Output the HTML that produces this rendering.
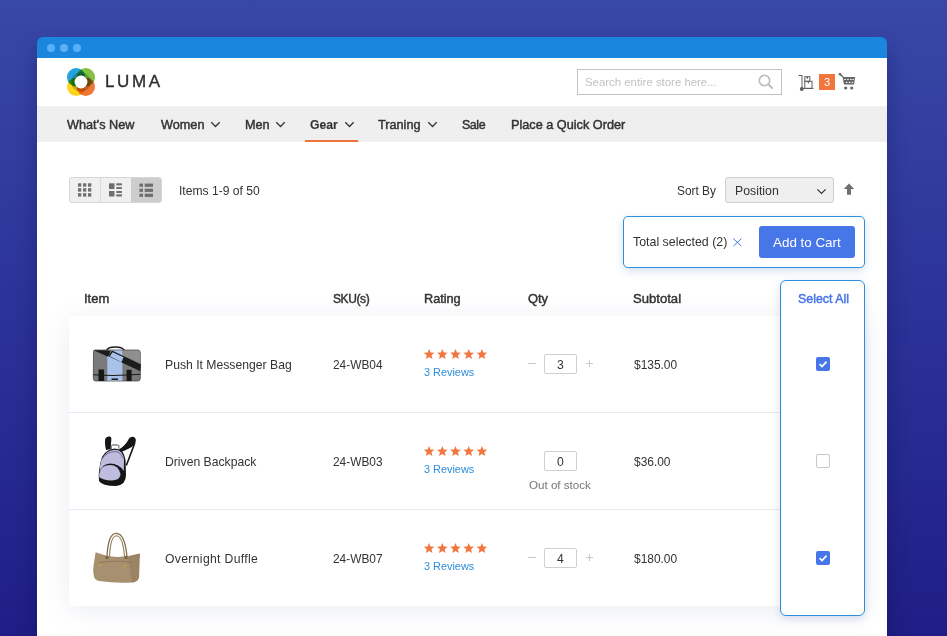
<!DOCTYPE html>
<html><head><meta charset="utf-8">
<style>
*{box-sizing:border-box;margin:0;padding:0}
html,body{width:947px;height:636px;overflow:hidden}
body{background:linear-gradient(180deg,#3848a6 0%,#2b3298 50%,#1f1e86 100%);font-family:"Liberation Sans",sans-serif;color:#333;position:relative}
.a{position:absolute;white-space:nowrap;line-height:1}
.win{position:absolute;left:37px;top:50px;width:850px;height:620px;background:#fff;border-radius:0;box-shadow:0 0 20px rgba(10,10,60,.3)}
.bar{position:absolute;left:37px;top:37px;width:850px;height:21px;background:#1a86dd;border-radius:6px 6px 0 0}
.dot{position:absolute;top:44px;width:8px;height:8px;border-radius:50%;background:#5ab0fb}
.nav{position:absolute;left:37px;top:106px;width:850px;height:36px;background:#efefef}
.nv{font-size:12.7px;font-weight:normal;color:#333;-webkit-text-stroke:0.45px #333}
.th{font-size:12.7px;font-weight:normal;color:#333;-webkit-text-stroke:0.45px #333}
.td{font-size:12.2px;color:#333}
.rv{font-size:10.9px;color:#2d8ddb}
svg{position:absolute;overflow:visible}
</style></head><body>
<div class="win"></div>
<div class="bar"></div>
<div class="dot" style="left:47px"></div>
<div class="dot" style="left:60px"></div>
<div class="dot" style="left:73px"></div>

<!-- logo -->
<svg style="left:67px;top:68px" width="28" height="28" viewBox="0 0 28 28">
  <g style="isolation:isolate">
  <circle cx="9.2" cy="9.2" r="9.2" fill="#26a3dd" style="mix-blend-mode:multiply"/>
  <circle cx="18.8" cy="9.2" r="9.2" fill="#83c341" style="mix-blend-mode:multiply"/>
  <circle cx="9.2" cy="18.8" r="9.2" fill="#fdd51a" style="mix-blend-mode:multiply"/>
  <circle cx="18.8" cy="18.8" r="9.2" fill="#f07636" style="mix-blend-mode:multiply"/>
  </g>
  <circle cx="14" cy="14" r="8" fill="none" stroke="rgba(0,0,0,.2)" stroke-width="3.6"/>
  <circle cx="14" cy="14" r="6.4" fill="#fff"/>
</svg>
<div class="a" style="left:105px;top:73px;font-size:17px;letter-spacing:2.6px;color:#2e2e2e;-webkit-text-stroke:0.35px #2e2e2e">LUMA</div>

<!-- search -->
<div class="a" style="left:577px;top:69px;width:205px;height:26px;border:1px solid #c2c2c2"></div>
<div class="a" style="left:585px;top:77px;font-size:11.4px;color:#c2c2c2">Search entire store here...</div>
<svg style="left:758px;top:74px" width="16" height="16" viewBox="0 0 16 16">
  <circle cx="6.5" cy="6.5" r="5.2" fill="none" stroke="#bcbcbc" stroke-width="1.6"/>
  <line x1="10.3" y1="10.3" x2="14.6" y2="14.6" stroke="#bcbcbc" stroke-width="2"/>
</svg>

<!-- nav -->
<div class="nav"></div>
<div class="a nv" style="left:67px;top:119px">What’s New</div>
<div class="a nv" style="left:161px;top:119px">Women</div>
<div class="a nv" style="left:245px;top:119px">Men</div>
<div class="a nv" style="left:310px;top:119px;font-size:12.2px;font-weight:bold;-webkit-text-stroke:0.1px #333">Gear</div>
<div class="a nv" style="left:378px;top:119px">Traning</div>
<div class="a nv" style="left:462px;top:119px;font-size:12.4px;letter-spacing:-0.4px">Sale</div>
<div class="a nv" style="left:511px;top:119px">Place a Quick Order</div>
<div class="a" style="left:305px;top:140px;width:53px;height:2px;background:#f0743a"></div>
<svg style="left:211px;top:122px" width="9" height="5" viewBox="0 0 9 5"><polyline points="0.3,0.3 4.5,4.5 8.7,0.3" fill="none" stroke="#333" stroke-width="1.3"/></svg>
<svg style="left:276px;top:122px" width="9" height="5" viewBox="0 0 9 5"><polyline points="0.3,0.3 4.5,4.5 8.7,0.3" fill="none" stroke="#333" stroke-width="1.3"/></svg>
<svg style="left:345px;top:122px" width="9" height="5" viewBox="0 0 9 5"><polyline points="0.3,0.3 4.5,4.5 8.7,0.3" fill="none" stroke="#333" stroke-width="1.3"/></svg>
<svg style="left:428px;top:122px" width="9" height="5" viewBox="0 0 9 5"><polyline points="0.3,0.3 4.5,4.5 8.7,0.3" fill="none" stroke="#333" stroke-width="1.3"/></svg>

<!-- header icons -->
<svg style="left:797px;top:73px" width="18" height="18" viewBox="0 0 18 18">
  <g fill="none" stroke="#5e5e5e" stroke-width="1">
    <path d="M1.5 2.5 H5 V15.5"/>
    <path d="M5 15.4 H16.6"/>
    <rect x="7.8" y="3.7" width="5" height="4.6"/>
    <rect x="7.8" y="8.3" width="7.2" height="7.1"/>
  </g>
  <rect x="9.6" y="3.7" width="1.4" height="2" fill="#5e5e5e"/>
  <rect x="10.7" y="8.3" width="1.4" height="2" fill="#5e5e5e"/>
  <circle cx="4.8" cy="16" r="2" fill="#5e5e5e"/>
</svg>
<div class="a" style="left:819px;top:74px;width:16px;height:16px;background:#f1763b"></div>
<div class="a" style="left:819px;top:77px;width:16px;text-align:center;font-size:11px;color:#fff">3</div>
<svg style="left:838px;top:72px" width="19" height="19" viewBox="0 0 19 19">
  <path d="M2 2.2 L5 5.1" stroke="#666" stroke-width="1.4" fill="none"/>
  <circle cx="2" cy="2.2" r="1.3" fill="#666"/>
  <path d="M4.6 5 H17.2 L16 12.6 H6 Z" fill="#666"/>
  <g fill="#fff">
    <rect x="6.3" y="6.9" width="1.5" height="1.1"/><rect x="9.2" y="6.9" width="1.5" height="1.1"/><rect x="12.1" y="6.9" width="1.5" height="1.1"/><rect x="14.6" y="6.9" width="1.3" height="1.1"/>
    <rect x="7.9" y="9.9" width="1.5" height="1.1"/><rect x="10.8" y="9.9" width="1.5" height="1.1"/><rect x="13.6" y="9.9" width="1.5" height="1.1"/>
  </g>
  <circle cx="7.7" cy="16" r="1.6" fill="#666"/>
  <circle cx="13.7" cy="16" r="1.6" fill="#666"/>
</svg>

<!-- toolbar -->
<div class="a" style="left:69px;top:177px;width:93px;height:26px;border:1px solid #d6d6d6;border-radius:3px;background:#f0f0f0;overflow:hidden">
  <div class="a" style="left:30px;top:0;width:1px;height:24px;background:#dcdcdc"></div>
  <div class="a" style="left:61px;top:0;width:31px;height:24px;background:#cdcdcd"></div>
</div>
<svg style="left:78px;top:183px" width="14" height="14" viewBox="0 0 14 14" fill="#6f6f6f">
  <rect x="0" y="0.3" width="3.3" height="3.4"/><rect x="5" y="0.3" width="3.3" height="3.4"/><rect x="10" y="0.3" width="3.3" height="3.4"/>
  <rect x="0" y="5.2" width="3.3" height="3.4"/><rect x="5" y="5.2" width="3.3" height="3.4"/><rect x="10" y="5.2" width="3.3" height="3.4"/>
  <rect x="0" y="10.2" width="3.3" height="3.4"/><rect x="5" y="10.2" width="3.3" height="3.4"/><rect x="10" y="10.2" width="3.3" height="3.4"/>
</svg>
<svg style="left:109px;top:183px" width="14" height="14" viewBox="0 0 14 14" fill="#6f6f6f">
  <rect x="0" y="0.3" width="5.5" height="5.7"/><rect x="0" y="8" width="5.5" height="5.5"/>
  <rect x="7.3" y="0.3" width="5.6" height="2.1"/><rect x="7.3" y="4.1" width="5.6" height="1.9"/>
  <rect x="7.3" y="8" width="5.6" height="2"/><rect x="7.3" y="11.3" width="5.6" height="2.2"/>
</svg>
<svg style="left:139px;top:183px" width="15" height="14" viewBox="0 0 15 14" fill="#6f6f6f">
  <rect x="0.4" y="0.6" width="3.6" height="3.2"/><rect x="5.7" y="0.6" width="8.3" height="3.2"/>
  <rect x="0.4" y="5.7" width="3.6" height="3.2"/><rect x="5.7" y="5.7" width="8.3" height="3.2"/>
  <rect x="0.4" y="10.7" width="3.6" height="3.2"/><rect x="5.7" y="10.7" width="8.3" height="3.2"/>
</svg>
<div class="a td" style="left:179px;top:185px;font-size:12.1px">Items 1-9 of 50</div>

<div class="a td" style="left:677px;top:186px;font-size:11.9px">Sort By</div>
<div class="a" style="left:725px;top:177px;width:109px;height:26px;border:1px solid #cfcfcf;border-radius:3px;background:#efefef"></div>
<div class="a td" style="left:735px;top:185px;font-size:12.3px">Position</div>
<svg style="left:817px;top:189px" width="9" height="5" viewBox="0 0 9 5"><polyline points="0.4,0.4 4.5,4.4 8.6,0.4" fill="none" stroke="#333" stroke-width="1.2"/></svg>
<svg style="left:843px;top:183px" width="12" height="12" viewBox="0 0 12 12"><path d="M6 0.4 L11.2 6 H8 V11.8 H4 V6 H0.8 Z" fill="#707070"/></svg>

<!-- selected box -->
<div class="a" style="left:623px;top:216px;width:242px;height:52px;border:1.5px solid #2b8fe0;border-radius:5px;background:#fff;box-shadow:0 3px 8px rgba(40,80,160,.18)"></div>
<div class="a td" style="left:633px;top:236px;font-size:12.4px">Total selected (2)</div>
<svg style="left:733px;top:238px" width="9" height="9" viewBox="0 0 9 9"><path d="M0.3 0.6 L8.4 8.1 M8.4 0.6 L0.3 8.1" stroke="#4776e9" stroke-width="1"/></svg>
<div class="a" style="left:759px;top:226px;width:96px;height:32px;background:#4776e9;border-radius:3px"></div>
<div class="a" style="left:773px;top:236px;font-size:13.4px;color:#fff">Add to Cart</div>

<!-- table card -->
<div class="a" style="left:69px;top:316px;width:796px;height:290px;background:#fff;border-radius:3px;box-shadow:0 4px 28px rgba(60,80,150,.10)"></div>
<div class="a" style="left:69px;top:412px;width:712px;height:1px;background:#e7ebf4"></div>
<div class="a" style="left:69px;top:509px;width:712px;height:1px;background:#e7ebf4"></div>

<div class="a th" style="left:84px;top:292px;font-size:13px">Item</div>
<div class="a th" style="left:333px;top:293px;font-size:12px;letter-spacing:-0.4px">SKU(s)</div>
<div class="a th" style="left:424px;top:293px;font-size:12.7px">Rating</div>
<div class="a th" style="left:528px;top:293px;font-size:12.9px">Qty</div>
<div class="a th" style="left:633px;top:292px;font-size:13.1px">Subtotal</div>

<!-- select column -->
<div class="a" style="left:780px;top:280px;width:85px;height:336px;border:1.5px solid #2b8fe0;border-radius:6px;background:#fff;box-shadow:0 3px 8px rgba(40,80,160,.18)"></div>
<div class="a th" style="left:798px;top:293px;font-size:12.4px;color:#4776e9;-webkit-text-stroke:0.45px #4776e9">Select All</div>


<!-- product images -->
<svg style="left:88px;top:340px" width="58" height="48" viewBox="0 0 58 48">
  <path d="M18.5 10.8 Q19.5 7 27.3 7 Q35 7 36.5 10.8" fill="none" stroke="#1e1e1e" stroke-width="1.6"/>
  <path d="M5.5 11.5 Q5.3 10 7 10 H50 Q52.3 10.2 52.3 12.5 V38.5 Q52.3 41 49.5 41 H8 Q5.3 41 5.3 38.5 Z" fill="#7a7a7a" stroke="#3a3a3a" stroke-width="0.7"/>
  <path d="M34.6 10.4 H50 Q52 10.4 52 12.5 V23 L34.6 15.5 Z" fill="#8f8f8f"/>
  <rect x="19.3" y="10.4" width="15.1" height="30.3" fill="#a8c2ea"/>
  <path d="M5.6 10.2 L23 10.6 L20 16.8 Z" fill="#1c1c1c"/>
  <path d="M24 10.6 L53 24.5 L52.3 31.2 L20 16 Z" fill="#1c1c1c"/>
  <path d="M24.6 12.2 L35.5 17.3 L33.5 22.2 L21.8 16.2 Z" fill="#a8c2ea"/>
  <path d="M5.3 34.8 Q28 36.3 52.3 34.3" fill="none" stroke="#1a1a1a" stroke-width="1.1"/>
  <rect x="10.5" y="29.5" width="5.6" height="11.5" fill="#161616"/>
  <rect x="38.6" y="29.8" width="5" height="11.2" fill="#161616"/>
  <rect x="23.5" y="38.4" width="6.5" height="1.6" fill="#222"/>
</svg>
<svg style="left:88px;top:430px" width="58" height="60" viewBox="0 0 58 60">
  <path d="M18 20 Q16.2 12 17.5 8.3 Q19 6 22 6.6 Q24 7.5 23.3 10 Q22.3 14 23.8 19 Z" fill="#151515"/>
  <path d="M31 19.5 Q38 15 41 8.5 Q43 6 46 7 Q48.5 8.5 47.6 12 Q46 16 41 18.5 Q36 21 33 22 Z" fill="#151515"/>
  <path d="M46.8 13 L38.3 35.5" fill="none" stroke="#151515" stroke-width="1.6"/>
  <path d="M23.3 19.5 V15.5 Q27 14 30.8 15.5 V19.5" fill="none" stroke="#8a8a8a" stroke-width="1.3"/>
  <path d="M14 27 Q18 19 27 18.5 Q36 19 37.5 30 L38 45 Q38 55 28 56 Q14 56 11 51 Q9.8 40 14 27 Z" fill="#151515"/>
  <path d="M13.5 30 Q18 19.8 27 19.8 Q35.3 20.3 36 30 L35.8 41 Q31 33.5 22 33.5 Q14 34 11.6 42.5 Q11.7 35 13.5 30 Z" fill="#bdbbde"/>
  <path d="M11.2 44 Q13 35 22 35 Q30.5 35 32.5 44 Q32.5 49.5 26 50.3 Q16 51 11.2 47 Z" fill="#bfbddf"/>
  <path d="M14.5 28 Q19 22 27 21.5 Q33 22 34.5 28" fill="none" stroke="#3c3a50" stroke-width="0.6"/>
</svg>
<svg style="left:88px;top:526px" width="58" height="62" viewBox="0 0 58 62">
  <path d="M19 31 Q20 7 28.3 7.3 Q37 7.5 39 31" fill="none" stroke="#7f6a4a" stroke-width="1.3"/>
  <path d="M21.5 31 Q22.5 10 28.3 9.8 Q35 10 36.5 31" fill="none" stroke="#8f7a58" stroke-width="1.1"/>
  <path d="M7.6 26.3 Q18 30.5 29.2 31 Q41 30.8 51.8 27.6 Q52.5 29 51.3 32 L51 51 Q50 56 44 56.5 Q28 57.5 11 55 Q6.5 54 5.8 50 Q4.5 44 5.8 38 Z" fill="#a69070"/>
  <path d="M40 31 L51.8 27.6 L51 51 Q50 56 44 56.5 Z" fill="#9a8463"/>
  <path d="M10 37 Q28 33.5 44 36.5" fill="none" stroke="#8a7455" stroke-width="0.8"/>
  <rect x="17.5" y="30" width="3" height="3" fill="#7a6546"/>
  <rect x="36.5" y="30" width="3" height="3" fill="#7a6546"/>
  <rect x="11.5" y="37.5" width="1.5" height="2.2" fill="#c9a93a"/>
  <rect x="36" y="38.5" width="1.5" height="2.2" fill="#c9a93a"/>
</svg>

<!-- rows -->
<div class="a td" style="left:165px;top:359px">Push It Messenger Bag</div>
<div class="a td" style="left:333px;top:360px;font-size:11.9px">24-WB04</div>
<svg style="left:424px;top:349px" width="64" height="11" viewBox="0 0 64 11" fill="#f0773f"><polygon transform="translate(0.0,0)" points="5.10,-0.10 6.57,3.48 10.43,3.77 7.48,6.27 8.39,10.03 5.10,8.00 1.81,10.03 2.72,6.27 -0.23,3.77 3.63,3.48"/><polygon transform="translate(13.2,0)" points="5.10,-0.10 6.57,3.48 10.43,3.77 7.48,6.27 8.39,10.03 5.10,8.00 1.81,10.03 2.72,6.27 -0.23,3.77 3.63,3.48"/><polygon transform="translate(26.4,0)" points="5.10,-0.10 6.57,3.48 10.43,3.77 7.48,6.27 8.39,10.03 5.10,8.00 1.81,10.03 2.72,6.27 -0.23,3.77 3.63,3.48"/><polygon transform="translate(39.6,0)" points="5.10,-0.10 6.57,3.48 10.43,3.77 7.48,6.27 8.39,10.03 5.10,8.00 1.81,10.03 2.72,6.27 -0.23,3.77 3.63,3.48"/><polygon transform="translate(52.8,0)" points="5.10,-0.10 6.57,3.48 10.43,3.77 7.48,6.27 8.39,10.03 5.10,8.00 1.81,10.03 2.72,6.27 -0.23,3.77 3.63,3.48"/></svg>
<div class="a rv" style="left:424px;top:367px">3 Reviews</div>
<div class="a" style="left:544px;top:354px;width:33px;height:20px;border:1px solid #cfcfcf;border-radius:2px"></div>
<div class="a td" style="left:544px;top:359px;width:33px;text-align:center">3</div>
<div class="a" style="left:528px;top:363px;width:8px;height:1px;background:#c8c8c8"></div>
<div class="a" style="left:586px;top:363px;width:7px;height:1px;background:#c8c8c8"></div>
<div class="a" style="left:589px;top:360px;width:1px;height:7px;background:#c8c8c8"></div>
<div class="a td" style="left:634px;top:360px;font-size:11.95px">$135.00</div>
<div class="a" style="left:816px;top:357px;width:14px;height:14px;background:#4776e9;border-radius:2px"></div>
<svg style="left:816px;top:357px" width="14" height="14" viewBox="0 0 14 14"><polyline points="3.6,7.2 6,9.6 10.6,4.6" fill="none" stroke="#fff" stroke-width="1.7"/></svg>
<div class="a td" style="left:165px;top:456px">Driven Backpack</div>
<div class="a td" style="left:333px;top:457px;font-size:11.9px">24-WB03</div>
<svg style="left:424px;top:446px" width="64" height="11" viewBox="0 0 64 11" fill="#f0773f"><polygon transform="translate(0.0,0)" points="5.10,-0.10 6.57,3.48 10.43,3.77 7.48,6.27 8.39,10.03 5.10,8.00 1.81,10.03 2.72,6.27 -0.23,3.77 3.63,3.48"/><polygon transform="translate(13.2,0)" points="5.10,-0.10 6.57,3.48 10.43,3.77 7.48,6.27 8.39,10.03 5.10,8.00 1.81,10.03 2.72,6.27 -0.23,3.77 3.63,3.48"/><polygon transform="translate(26.4,0)" points="5.10,-0.10 6.57,3.48 10.43,3.77 7.48,6.27 8.39,10.03 5.10,8.00 1.81,10.03 2.72,6.27 -0.23,3.77 3.63,3.48"/><polygon transform="translate(39.6,0)" points="5.10,-0.10 6.57,3.48 10.43,3.77 7.48,6.27 8.39,10.03 5.10,8.00 1.81,10.03 2.72,6.27 -0.23,3.77 3.63,3.48"/><polygon transform="translate(52.8,0)" points="5.10,-0.10 6.57,3.48 10.43,3.77 7.48,6.27 8.39,10.03 5.10,8.00 1.81,10.03 2.72,6.27 -0.23,3.77 3.63,3.48"/></svg>
<div class="a rv" style="left:424px;top:464px">3 Reviews</div>
<div class="a" style="left:544px;top:451px;width:33px;height:20px;border:1px solid #cfcfcf;border-radius:2px"></div>
<div class="a td" style="left:544px;top:456px;width:33px;text-align:center">0</div>
<div class="a td" style="left:529px;top:479px;font-size:11.6px;color:#777">Out of stock</div>
<div class="a td" style="left:634px;top:457px;font-size:11.95px">$36.00</div>
<div class="a" style="left:816px;top:454px;width:14px;height:14px;border:1px solid #c8c8c8;border-radius:2px;background:#fff"></div>
<div class="a td" style="letter-spacing:0.33px;left:165px;top:553px">Overnight Duffle</div>
<div class="a td" style="left:333px;top:554px;font-size:11.9px">24-WB07</div>
<svg style="left:424px;top:543px" width="64" height="11" viewBox="0 0 64 11" fill="#f0773f"><polygon transform="translate(0.0,0)" points="5.10,-0.10 6.57,3.48 10.43,3.77 7.48,6.27 8.39,10.03 5.10,8.00 1.81,10.03 2.72,6.27 -0.23,3.77 3.63,3.48"/><polygon transform="translate(13.2,0)" points="5.10,-0.10 6.57,3.48 10.43,3.77 7.48,6.27 8.39,10.03 5.10,8.00 1.81,10.03 2.72,6.27 -0.23,3.77 3.63,3.48"/><polygon transform="translate(26.4,0)" points="5.10,-0.10 6.57,3.48 10.43,3.77 7.48,6.27 8.39,10.03 5.10,8.00 1.81,10.03 2.72,6.27 -0.23,3.77 3.63,3.48"/><polygon transform="translate(39.6,0)" points="5.10,-0.10 6.57,3.48 10.43,3.77 7.48,6.27 8.39,10.03 5.10,8.00 1.81,10.03 2.72,6.27 -0.23,3.77 3.63,3.48"/><polygon transform="translate(52.8,0)" points="5.10,-0.10 6.57,3.48 10.43,3.77 7.48,6.27 8.39,10.03 5.10,8.00 1.81,10.03 2.72,6.27 -0.23,3.77 3.63,3.48"/></svg>
<div class="a rv" style="left:424px;top:561px">3 Reviews</div>
<div class="a" style="left:544px;top:548px;width:33px;height:20px;border:1px solid #cfcfcf;border-radius:2px"></div>
<div class="a td" style="left:544px;top:553px;width:33px;text-align:center">4</div>
<div class="a" style="left:528px;top:557px;width:8px;height:1px;background:#c8c8c8"></div>
<div class="a" style="left:586px;top:557px;width:7px;height:1px;background:#c8c8c8"></div>
<div class="a" style="left:589px;top:554px;width:1px;height:7px;background:#c8c8c8"></div>
<div class="a td" style="left:634px;top:554px;font-size:11.95px">$180.00</div>
<div class="a" style="left:816px;top:551px;width:14px;height:14px;background:#4776e9;border-radius:2px"></div>
<svg style="left:816px;top:551px" width="14" height="14" viewBox="0 0 14 14"><polyline points="3.6,7.2 6,9.6 10.6,4.6" fill="none" stroke="#fff" stroke-width="1.7"/></svg>
</body></html>
